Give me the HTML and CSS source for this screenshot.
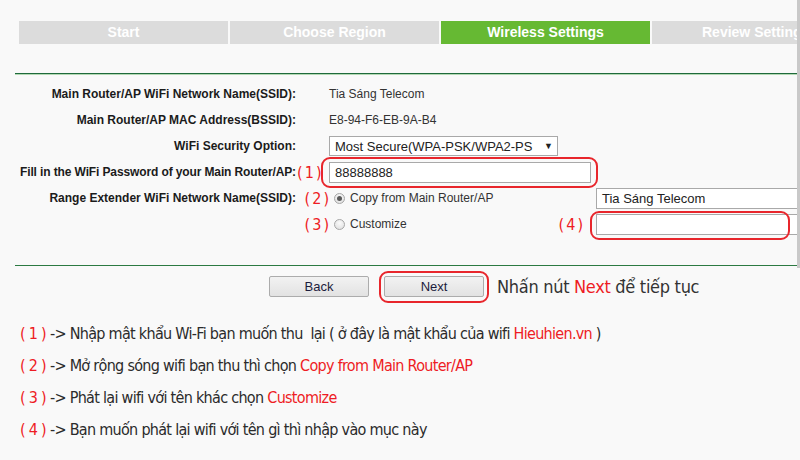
FILE: index.html
```html
<!DOCTYPE html>
<html lang="vi">
<head>
  <meta charset="UTF-8">
  <title>Wireless Settings</title>
  <link rel="stylesheet" href="styles.css">
</head>
<body>
  <div class="panel">
    <div class="steps">
      <div class="steps__item">Start</div>
      <div class="steps__item">Choose Region</div>
      <div class="steps__item is-active">Wireless Settings</div>
      <div class="steps__item">Review Settings</div>
    </div>

    <div class="rule"></div>

    <div class="form">
      <div class="form__row">
        <div class="form__label">Main Router/AP WiFi Network Name(SSID):</div>
        <div></div>
        <div class="form__value">Tia Sáng Telecom</div>
      </div>
      <div class="form__row">
        <div class="form__label">Main Router/AP MAC Address(BSSID):</div>
        <div></div>
        <div class="form__value">E8-94-F6-EB-9A-B4</div>
      </div>
      <div class="form__row">
        <div class="form__label">WiFi Security Option:</div>
        <div></div>
        <div class="form__value">
          <div class="select">
            <span class="select__text">Most Secure(WPA-PSK/WPA2-PS</span>
            <span class="select__arrow">▼</span>
          </div>
        </div>
      </div>
      <div class="form__row">
        <div class="form__label form__label--long">Fill in the WiFi Password of your Main Router/AP:</div>
        <div class="note note--start">( 1 )</div>
        <div class="form__value">
          <div class="mark mark--pass">
            <div class="field field--pass">88888888</div>
          </div>
        </div>
      </div>
      <div class="form__row">
        <div class="form__label">Range Extender WiFi Network Name(SSID):</div>
        <div class="note note--end">( 2 )</div>
        <div class="form__value form__value--split">
          <div class="choice">
            <span class="radio is-checked"></span>
            <span>Copy from Main Router/AP</span>
          </div>
          <div class="field field--wide">Tia Sáng Telecom</div>
        </div>
      </div>
      <div class="form__row">
        <div></div>
        <div class="note note--end">( 3 )</div>
        <div class="form__value form__value--split">
          <div class="choice">
            <span class="radio"></span>
            <span>Customize</span>
            <span class="note choice__note">( 4 )</span>
          </div>
          <div class="mark mark--custom">
            <div class="field field--wide"></div>
          </div>
        </div>
      </div>
    </div>

    <div class="rule rule--bottom"></div>
  </div>

  <div class="actions">
    <button class="button">Back</button>
    <div class="mark mark--next">
      <button class="button">Next</button>
    </div>
    <div class="actions__hint">Nhấn nút <span class="red">Next</span> để tiếp tục</div>
  </div>

  <div class="notes">
    <div><span class="red">( 1 )</span> -&gt; Nhập mật khẩu Wi-Fi bạn muốn thu&nbsp; lại ( ở đây là mật khẩu của wifi <span class="red">Hieuhien.vn</span> )</div>
    <div><span class="red">( 2 )</span> -&gt; Mở rộng sóng wifi bạn thu thì chọn <span class="red">Copy from Main Router/AP</span></div>
    <div><span class="red">( 3 )</span> -&gt; Phát lại wifi với tên khác chọn <span class="red">Customize</span></div>
    <div><span class="red">( 4 )</span> -&gt; Bạn muốn phát lại wifi với tên gì thì nhập vào mục này</div>
  </div>
</body>
</html>
```

FILE: styles.css
```css
:root {
  --red: #ee1c24;
  --narrow: 'Liberation Sans Narrow', 'DejaVu Sans Condensed', 'Liberation Sans', sans-serif;
}

* {
  box-sizing: border-box;
}

html, body {
  margin: 0;
  padding: 0;
  background: #f9f9f9;
  font-family: 'Liberation Sans', Arial, sans-serif;
  color: #222;
}

.red {
  color: var(--red);
}

.panel {
  width: 800px;
  height: 268px;
  overflow: hidden;
  padding-top: 21px;
  border-right: 3px solid #c9c9c9;
}

.steps {
  display: flex;
  gap: 2px;
  padding-left: 19px;
}

.steps__item {
  flex: none;
  width: 209px;
  height: 23px;
  line-height: 23px;
  background: #dcdcdc;
  color: #fff;
  font-size: 14px;
  font-weight: bold;
  text-align: center;
  white-space: nowrap;
}

.steps__item:last-child {
  width: 146px;
  text-align: left;
  padding-left: 50px;
}

.steps__item.is-active {
  background: #66b933;
}

.rule {
  margin: 29px 0 0 15px;
  border-top: 1px solid #1f6a3c;
  border-bottom: 1px solid #b4d9b4;
}

.rule--bottom {
  margin-top: 28px;
  border-bottom: 0;
  border-top-color: #2c7a42;
}

.form {
  padding-top: 6px;
}

.form__row {
  display: grid;
  grid-template-columns: 297px 32px 1fr;
  align-items: center;
  height: 26px;
}

.form__label {
  padding-right: 1px;
  text-align: right;
  font-size: 12px;
  font-weight: bold;
  color: #1b1b1b;
  white-space: nowrap;
}

.form__label--long {
  letter-spacing: -0.12px;
}

.form__value {
  font-size: 12px;
  color: #333;
  white-space: nowrap;
}

.form__value--split {
  display: flex;
  align-items: center;
}

.note {
  font-family: var(--narrow);
  font-size: 16px;
  letter-spacing: -1.2px;
  color: var(--red);
  white-space: nowrap;
}

.note--start {
  justify-self: start;
}

.note--end {
  justify-self: end;
  padding-right: 1px;
}

.select {
  display: flex;
  align-items: center;
  width: 229px;
  height: 20px;
  padding: 0 4px 0 5px;
  border: 1px solid #a9a9a9;
  background: #fff;
  font-size: 13px;
  color: #222;
}

.select__text {
  flex: 1;
}

.select__arrow {
  margin-left: 6px;
  font-size: 9px;
}

.field {
  height: 21px;
  padding: 0 5px;
  border: 1px solid #a9a9a9;
  background: #fff;
  font-size: 13px;
  line-height: 19px;
  color: #222;
}

.field--pass {
  width: 262px;
}

.field--wide {
  width: 205px;
  flex: none;
}

.choice {
  display: flex;
  align-items: center;
  flex: none;
  width: 267px;
  padding-left: 5px;
  padding-right: 14px;
}

.choice__note {
  margin-left: auto;
}

.radio {
  width: 11px;
  height: 11px;
  margin-right: 5px;
  border: 1px solid #a6a6a6;
  border-radius: 50%;
  background: radial-gradient(circle at 50% 35%, #fbfbfb, #dcdcdc);
  position: relative;
}

.radio.is-checked::after {
  content: '';
  position: absolute;
  top: 2px;
  left: 2px;
  width: 5px;
  height: 5px;
  border-radius: 50%;
  background: #5a5a5a;
}

.mark {
  position: relative;
  display: inline-block;
}

.mark::after {
  content: '';
  position: absolute;
  border: 2px solid #e8262c;
  border-radius: 9px;
  pointer-events: none;
}

.mark--pass::after {
  top: -5px;
  bottom: -5px;
  left: -8px;
  right: -7px;
}

.mark--custom {
  flex: none;
}

.mark--custom::after {
  top: -3px;
  bottom: -5px;
  left: -6px;
  right: 11px;
}

.mark--next::after {
  top: -5px;
  bottom: -6px;
  left: -5px;
  right: -5px;
}

.actions {
  display: flex;
  align-items: center;
  gap: 15px;
  padding: 8px 0 0 269px;
}

.button {
  display: block;
  width: 100px;
  height: 21px;
  padding: 0;
  border: 1px solid #acacac;
  border-radius: 2px;
  background: linear-gradient(#f2f2f2, #e2e2e2);
  font-family: 'Liberation Sans', Arial, sans-serif;
  font-size: 13px;
  color: #1c1c3c;
}

.actions__hint {
  margin-left: -2px;
  font-family: var(--narrow);
  font-size: 18px;
  letter-spacing: -0.3px;
  color: #333;
}

.notes {
  padding: 21px 0 0 20px;
  font-family: var(--narrow);
  font-size: 16px;
  letter-spacing: -0.7px;
  line-height: 32px;
  color: #2b2b2b;
}
```
